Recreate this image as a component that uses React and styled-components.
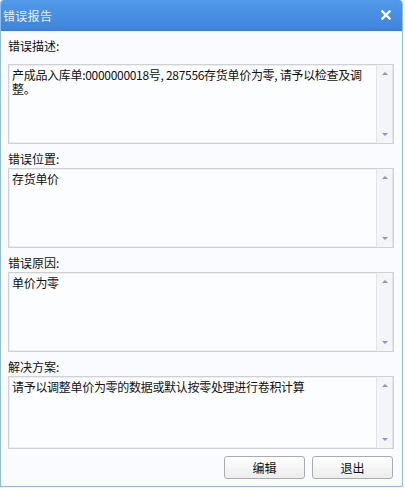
import React from 'react';
import styled, { createGlobalStyle } from 'styled-components';

const GlobalStyle = createGlobalStyle`
  html, body { margin: 0; padding: 0; background: #ffffff; }
  body { font-family: "Noto Sans CJK SC", "Noto Sans", sans-serif; }
`;

const Window = styled.div`
  width: 403px;
  height: 487px;
  box-sizing: border-box;
  border: 1px solid #8dbcef;
  border-top: none;
  border-radius: 4px 4px 0 0;
  background: #f9fbfe;
  display: flex;
  flex-direction: column;
  overflow: hidden;
`;

const TitleBar = styled.div`
  height: 31px;
  flex: none;
  display: flex;
  align-items: center;
  justify-content: space-between;
  padding: 0 11px 0 2px;
  background: linear-gradient(#5199e9, #3f84da);
  border-bottom: 1px solid #3a79c8;
  box-sizing: border-box;
`;

const Title = styled.span`
  font-size: 12px;
  color: #e6effb;
  letter-spacing: 0.3px;
`;

const Close = styled.button`
  border: none;
  background: none;
  padding: 0;
  width: 10px;
  height: 10px;
  display: flex;
  cursor: pointer;
`;

const Body = styled.div`
  flex: 1;
  display: flex;
  flex-direction: column;
  padding: 0 8px 0 7px;
`;

const Label = styled.div`
  font-size: 12px;
  line-height: 18px;
  color: #111;
  margin-top: 6px;
  margin-bottom: ${(p) => (p.$spaced ? '9px' : '0')};
`;

const Box = styled.div`
  height: ${(p) => p.$h}px;
  box-sizing: border-box;
  border: 1px solid #cfd1d4;
  box-shadow: inset 0 0 0 1px #eceef1;
  background: #fcfdff;
  display: flex;
`;

const Text = styled.div`
  flex: 1;
  font-size: 12px;
  line-height: 14px;
  letter-spacing: -0.3px;
  color: #111;
  padding: 3px 0 0 3px;
  white-space: pre-wrap;
  word-break: break-all;
`;

const ScrollBar = styled.div`
  width: 17px;
  flex: none;
  box-sizing: border-box;
  border-left: 1px solid #e1e3e6;
  border-right: 1px solid #e1e3e6;
  background: #f3f5f8;
  display: flex;
  flex-direction: column;
  justify-content: space-between;
  align-items: center;
  padding: 7px 0;
`;

const Arrow = styled.span`
  width: 0;
  height: 0;
  border-left: 3px solid transparent;
  border-right: 3px solid transparent;
  ${(p) => (p.$down ? 'border-top' : 'border-bottom')}: 3px solid #8c99a8;
`;

const Footer = styled.div`
  display: flex;
  justify-content: flex-end;
  gap: 7px;
  padding: 7px 1px 0 0;
`;

const Button = styled.button`
  width: 81px;
  height: 23px;
  box-sizing: border-box;
  border: 1px solid #a9abae;
  border-radius: 3px;
  background: linear-gradient(#ffffff, #ececec);
  font-family: "Noto Sans CJK SC", sans-serif;
  font-size: 12px;
  color: #111;
  padding: 0;
  cursor: pointer;
`;

const fields = [
  {
    label: '错误描述:',
    text: '产成品入库单:0000000018号, 287556存货单价为零, 请予以检查及调\n整。',
    h: 80,
    spaced: true,
  },
  { label: '错误位置:', text: '存货单价', h: 80 },
  { label: '错误原因:', text: '单价为零', h: 80 },
  { label: '解决方案:', text: '请予以调整单价为零的数据或默认按零处理进行卷积计算', h: 73 },
];

export default function App() {
  return (
    <>
      <GlobalStyle />
      <Window>
        <TitleBar>
          <Title>错误报告</Title>
          <Close aria-label="关闭">
            <svg width="10" height="10" viewBox="0 0 10 10">
              <path d="M1.5 1.5 L8.5 8.5 M8.5 1.5 L1.5 8.5" stroke="#ffffff" strokeWidth="2.4" strokeLinecap="square" />
            </svg>
          </Close>
        </TitleBar>
        <Body>
          {fields.map((f) => (
            <React.Fragment key={f.label}>
              <Label $spaced={f.spaced}>{f.label}</Label>
              <Box $h={f.h}>
                <Text>{f.text}</Text>
                <ScrollBar>
                  <Arrow />
                  <Arrow $down />
                </ScrollBar>
              </Box>
            </React.Fragment>
          ))}
          <Footer>
            <Button>编辑</Button>
            <Button>退出</Button>
          </Footer>
        </Body>
      </Window>
    </>
  );
}
